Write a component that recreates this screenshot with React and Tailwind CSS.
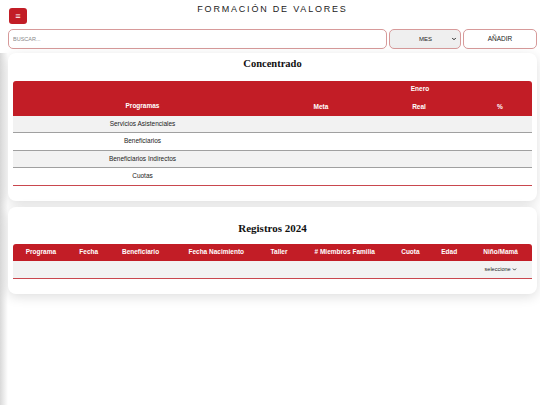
import { ChevronDown } from 'lucide-react';

const ROWS = ['Servicios Asistenciales', 'Beneficiarios', 'Beneficiarios Indirectos', 'Cuotas'];
const COLS = [
    { label: 'Programa', w: 'w-[56px]' },
    { label: 'Fecha', w: 'w-[40px]' },
    { label: 'Beneficiario', w: 'w-[64px]' },
    { label: 'Fecha Nacimiento', w: 'w-[88px]' },
    { label: 'Taller', w: 'w-[38px]' },
    { label: '# Miembros Familia', w: 'w-[94px]' },
    { label: 'Cuota', w: 'w-[38px]' },
    { label: 'Edad', w: 'w-[40px]' },
    { label: 'Niño/Mamá', w: 'w-[63px]' },
];

function Card({ title, titleSize, children, className = '' }) {
    return (
        <div className={`rounded-[8px] bg-white px-[5px] shadow-[0_3px_12px_rgba(0,0,0,0.13)] ${className}`}>
            <h2 className={`text-center font-['Liberation_Serif',serif] font-bold leading-none text-[#111] ${titleSize}`}>{title}</h2>
            {children}
        </div>
    );
}

export default function App() {
    return (
        <div className="flex min-h-screen flex-col bg-white font-['Liberation_Sans',Arial,sans-serif]">
            <div className="pl-2 pr-[3px] pt-[3px]">
                <div className="grid grid-cols-[1fr_auto_1fr] items-start">
                    <button className="mt-[5px] ml-[1px] flex h-[16px] w-[18px] items-center justify-center rounded-[3px] bg-[#c21d26] text-[9px] font-bold leading-none text-white">≡</button>
                    <h1 className="text-[9px] tracking-[0.2em] text-[#222]">FORMACIÓN DE VALORES</h1>
                    <div />
                </div>
                <div className="mt-[5px] flex h-[20px] gap-[2px]">
                    <input placeholder="BUSCAR..." className="h-full flex-1 rounded-[5px] border border-[#d79a9a] px-[4px] text-[5.5px] text-[#555] outline-none placeholder:text-[#888]" />
                    <div className="flex h-full w-[72px] items-center justify-center rounded-[5px] border border-[#d79a9a] bg-[#efefef] pl-[10px] pr-[3px] text-[6px] text-[#222]">
                        <span className="flex-1 text-center">MES</span>
                        <ChevronDown className="h-[6px] w-[6px]" strokeWidth={4} />
                    </div>
                    <button className="h-full w-[74px] rounded-[5px] border border-[#d79a9a] bg-white text-[6.5px] text-[#222]">AÑADIR</button>
                </div>
            </div>

            <div className="mt-[4px] flex flex-1">
                <div className="w-[8px] shrink-0 bg-[linear-gradient(to_right,#d9d9d9,#f4f4f4_70%,#ffffff)]" />
                <div className="flex flex-1 flex-col gap-[6px] pr-[3px]">
                    <Card title="Concentrado" titleSize="text-[10.5px]" className="pt-[6px] pb-[15px]">
                        <table className="mt-[11px] w-full border-separate border-spacing-0 text-[6.5px]">
                            <thead className="text-white">
                                <tr className="bg-[#c21d26]">
                                    <th rowSpan={2} className="w-[259px] rounded-tl-[3px] pb-[5px] align-bottom font-bold">Programas</th>
                                    <th colSpan={3} className="h-[17px] rounded-tr-[3px] pl-[36px] font-bold">Enero</th>
                                </tr>
                                <tr className="bg-[#c21d26]">
                                    <th className="h-[18px] w-[98px] font-bold">Meta</th>
                                    <th className="w-[98px] font-bold">Real</th>
                                    <th className="font-bold">%</th>
                                </tr>
                            </thead>
                            <tbody className="text-[#222]">
                                {ROWS.map((r, i) => {
                                    const cell = `border-b ${i === ROWS.length - 1 ? 'border-[#c9474e]' : 'border-[#a0a0a0]'}`;
                                    return (
                                        <tr key={r} className={`h-[17.5px] ${i % 2 === 0 ? 'bg-[#f2f2f2]' : 'bg-white'}`}>
                                            <td className={`text-center ${cell}`}>{r}</td>
                                            <td className={cell} /><td className={cell} /><td className={cell} />
                                        </tr>
                                    );
                                })}
                            </tbody>
                        </table>
                    </Card>

                    <Card title="Registros 2024" titleSize="text-[11px]" className="pt-[16px] pb-[15px]">
                        <table className="mt-[10px] w-full border-separate border-spacing-0 text-[6.5px]">
                            <thead className="text-white">
                                <tr className="bg-[#c21d26]">
                                    {COLS.map((c, i) => (
                                        <th key={c.label} className={`h-[17px] font-bold ${c.w} ${i === 0 ? 'rounded-tl-[3px]' : ''} ${i === COLS.length - 1 ? 'rounded-tr-[3px]' : ''}`}>{c.label}</th>
                                    ))}
                                </tr>
                            </thead>
                            <tbody>
                                <tr className="h-[18px] bg-[#f2f2f2]">
                                    {COLS.slice(0, -1).map(c => <td key={c.label} className="border-b border-[#c9474e]" />)}
                                    <td className="border-b border-[#c9474e] text-center text-[5.5px] text-[#222]">
                                        <span className="inline-flex items-center gap-[1px]">seleccione<ChevronDown className="h-[5px] w-[5px]" strokeWidth={4} /></span>
                                    </td>
                                </tr>
                            </tbody>
                        </table>
                    </Card>
                </div>
            </div>
        </div>
    );
}
